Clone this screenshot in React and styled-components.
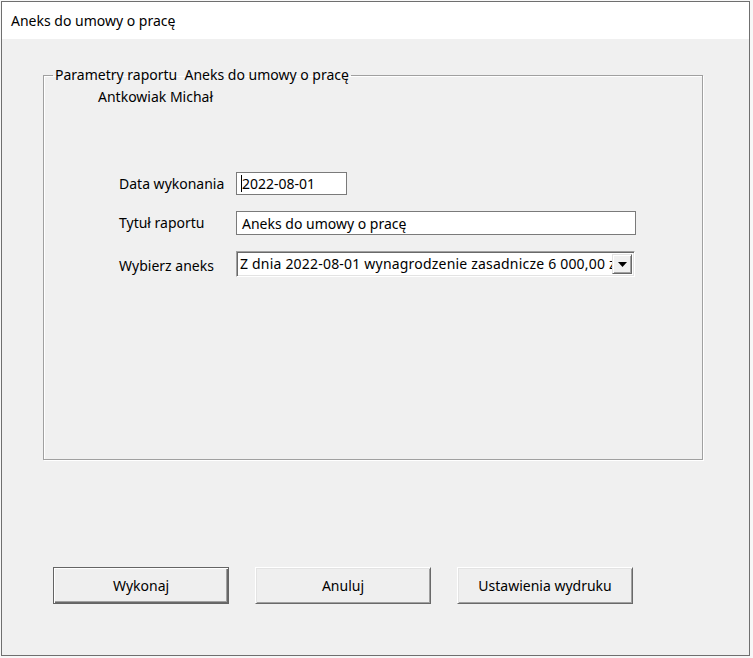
import React from 'react';
import styled, { createGlobalStyle } from 'styled-components';

// Classic Win32 dialog: "Aneks do umowy o pracę" report parameters

const GlobalStyle = createGlobalStyle`
    html, body {
        margin: 0;
        padding: 0;
        background: #f7f7f7;
    }
    body {
        font-family: "Noto Sans", "Open Sans", sans-serif;
        color: #000;
    }
`

const Desktop = styled.div`
    width: 753px;
    height: 658px;
    box-sizing: border-box;
    padding: 1px 0 0 1px;
    overflow: hidden;
`

const DialogWindow = styled.div`
    width: 749px;
    height: 655px;
    box-sizing: border-box;
    border: 1px solid #6f6f6f;
    background: #f0f0f0;
    display: flex;
    flex-direction: column;
`

const TitleBar = styled.div`
    height: 37px;
    background: #fff;
    display: flex;
    align-items: center;
    padding-left: 9px;
    font-size: 14px;
`

const Content = styled.div`
    display: flex;
    flex-direction: column;
    padding: 0 0 0 41px;
`

const GroupBox = styled.fieldset`
    box-sizing: border-box;
    width: 660px;
    height: 395px;
    margin: 26px 0 0 0;
    padding: 0;
    border: 1px solid #a0a0a0;
    box-shadow: 1px 1px 0 #fff, inset 1px 1px 0 #fff;
`

const GroupLegend = styled.legend`
    margin-left: 9px;
    padding: 0 2px;
    font-size: 14px;
    line-height: 20px;
`

const EmployeeName = styled.div`
    margin: 2px 0 0 54px;
    font-size: 14px;
    line-height: 20px;
`

const FormGrid = styled.div`
    display: grid;
    grid-template-columns: 117px auto;
    row-gap: 16px;
    align-items: center;
    margin: 65px 0 0 75px;
`

const FieldLabel = styled.div`
    font-size: 14px;
    line-height: 20px;
    padding-top: ${p => p.$drop || 0}px;
`

const TextBox = styled.div`
    box-sizing: border-box;
    width: ${p => p.$width}px;
    height: ${p => p.$height}px;
    border: 1px solid #7a7a7a;
    background: #fff;
    display: flex;
    align-items: center;
    padding-left: 5px;
    font-size: 14px;
    white-space: nowrap;
`

const Caret = styled.span`
    display: inline-block;
    width: 1px;
    height: 17px;
    background: #000;
    margin: 0 0 0 -1px;
`

const ComboBox = styled.div`
    box-sizing: border-box;
    width: 399px;
    height: 26px;
    border: 1px solid;
    border-color: #a0a0a0 #fff #fff #a0a0a0;
    box-shadow: inset 1px 1px 0 #696969, inset -1px -1px 0 #e3e3e3;
    background: #fff;
    display: flex;
    align-items: stretch;
    padding: 2px;
`

const ComboText = styled.div`
    flex: 1;
    overflow: hidden;
    white-space: nowrap;
    font-size: 14px;
    line-height: 20px;
    letter-spacing: 0.2px;
    padding-left: 1px;
`

const ComboButton = styled.div`
    box-sizing: border-box;
    width: 20px;
    background: #f0f0f0;
    border: 1px solid;
    border-color: #e3e3e3 #696969 #696969 #e3e3e3;
    box-shadow: inset 1px 1px 0 #fff, inset -1px -1px 0 #a0a0a0;
    display: flex;
    align-items: center;
    justify-content: center;
`

const ButtonRow = styled.div`
    display: flex;
    gap: 26px;
    margin: 107px 0 0 10px;
`

const DialogButton = styled.div`
    box-sizing: border-box;
    width: ${p => p.$width || 176}px;
    height: 37px;
    background: #efefef;
    display: flex;
    align-items: center;
    justify-content: center;
    font-size: 14px;
    border: 1px solid;
    border-color: ${p => p.$default ? '#646464' : '#fff #696969 #696969 #fff'};
    box-shadow: ${p => p.$default
        ? 'inset 1px 1px 0 #fff, inset -1px -1px 0 #696969, inset -2px -2px 0 #a0a0a0'
        : 'inset 1px 1px 0 #e3e3e3, inset -1px -1px 0 #a0a0a0'};
`

const App = () => {
    return (
        <Desktop>
            <GlobalStyle />
            <DialogWindow>
                <TitleBar>Aneks do umowy o pracę</TitleBar>
                <Content>
                    <GroupBox>
                        <GroupLegend>Parametry raportu&nbsp; Aneks do umowy o pracę</GroupLegend>
                        <EmployeeName>Antkowiak Michał</EmployeeName>
                        <FormGrid>
                            <FieldLabel>Data wykonania</FieldLabel>
                            <TextBox $width={111} $height={23}>
                                <Caret />2022-08-01
                            </TextBox>
                            <FieldLabel>Tytuł raportu</FieldLabel>
                            <TextBox $width={400} $height={24}>Aneks do umowy o pracę</TextBox>
                            <FieldLabel $drop={3}>Wybierz aneks</FieldLabel>
                            <ComboBox>
                                <ComboText>Z dnia 2022-08-01 wynagrodzenie zasadnicze 6 000,00 zł</ComboText>
                                <ComboButton>
                                    <svg width="9" height="5" viewBox="0 0 9 5">
                                        <path d="M0 0 H9 L4.5 5 Z" fill="#000" />
                                    </svg>
                                </ComboButton>
                            </ComboBox>
                        </FormGrid>
                    </GroupBox>
                    <ButtonRow>
                        <DialogButton $default>Wykonaj</DialogButton>
                        <DialogButton>Anuluj</DialogButton>
                        <DialogButton>Ustawienia wydruku</DialogButton>
                    </ButtonRow>
                </Content>
            </DialogWindow>
        </Desktop>
    );
}

export default App;
